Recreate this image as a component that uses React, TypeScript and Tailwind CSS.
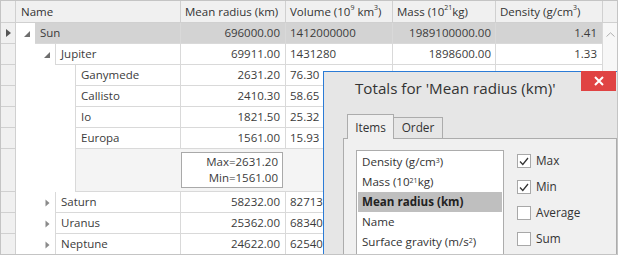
import React from "react";

type Row = {
  name: string;
  level: number;
  state: "open" | "closed" | "leaf";
  radius: string;
  volume: React.ReactNode;
  mass: string;
  density: string;
  current?: boolean;
};

const rows: Row[] = [
  { name: "Sun", level: 0, state: "open", radius: "696000.00", volume: "1412000000", mass: "1989100000.00", density: "1.41", current: true },
  { name: "Jupiter", level: 1, state: "open", radius: "69911.00", volume: "1431280", mass: "1898600.00", density: "1.33" },
  { name: "Ganymede", level: 2, state: "leaf", radius: "2631.20", volume: "76.30", mass: "148.19", density: "1.94" },
  { name: "Callisto", level: 2, state: "leaf", radius: "2410.30", volume: "58.65", mass: "107.59", density: "1.83" },
  { name: "Io", level: 2, state: "leaf", radius: "1821.50", volume: "25.32", mass: "89.32", density: "3.53" },
  { name: "Europa", level: 2, state: "leaf", radius: "1561.00", volume: "15.93", mass: "48.00", density: "3.01" },
];

const planets: Row[] = [
  { name: "Saturn", level: 1, state: "closed", radius: "58232.00", volume: "827130", mass: "568460.00", density: "0.69" },
  { name: "Uranus", level: 1, state: "closed", radius: "25362.00", volume: "68340", mass: "86832.00", density: "1.27" },
  { name: "Neptune", level: 1, state: "closed", radius: "24622.00", volume: "62540", mass: "102430.00", density: "1.64" },
];

const font = { fontFamily: "'Open Sans', 'Noto Sans', sans-serif" };

function OpenArrow() {
  return (
    <svg width="6" height="6" viewBox="0 0 6 6">
      <polygon points="6,0 6,6 0,6" fill="#6e6e6e" />
    </svg>
  );
}

function ClosedArrow() {
  return (
    <svg width="5" height="8" viewBox="0 0 5 8">
      <polygon points="0.5,0.5 4.5,4 0.5,7.5" fill="#8a8a8a" />
    </svg>
  );
}

function Indicator({ current }: { current?: boolean }) {
  return (
    <div className="flex h-full w-[15px] shrink-0 items-center border-r border-b border-[#d0d0d0] bg-[#f0f0f0] pl-[5px]">
      {current ? (
        <svg width="5" height="8" viewBox="0 0 5 8">
          <polygon points="0,0 5,4 0,8" fill="#555" />
        </svg>
      ) : null}
    </div>
  );
}

function DataRow({ r }: { r: Row }) {
  const indent = r.level === 0 ? "w-[19px]" : r.level === 1 ? "w-[39px]" : "w-[59px]";
  return (
    <div className="flex h-[21px] text-[11.5px] text-[#3b3b3b]">
      <Indicator current={r.current} />
      <div className="flex w-[165px] shrink-0">
        <div className={`${indent} flex shrink-0 items-center justify-end bg-white pr-[5px]`}>
          {r.state === "open" ? <OpenArrow /> : r.state === "closed" ? <ClosedArrow /> : null}
        </div>
        <div
          className={`flex flex-1 items-center border-r border-b border-[#d9d9d9] pl-[5px] ${
            r.current ? "bg-[#d3d3d3]" : "border-l"
          }`}
        >
          {r.name}
        </div>
      </div>
      <div className={`flex flex-1 ${r.current ? "bg-[#d3d3d3]" : ""}`}>
        <div className="flex w-[105px] shrink-0 items-center justify-end border-r border-b border-[#d9d9d9] pr-[5px]">
          {r.radius}
        </div>
        <div className="flex w-[107px] shrink-0 items-center border-r border-b border-[#d9d9d9] pl-[4px]">
          {r.volume}
        </div>
        <div className="flex w-[103px] shrink-0 items-center justify-end border-r border-b border-[#d9d9d9] pr-[4px]">
          {r.mass}
        </div>
        <div className="flex w-[107px] shrink-0 items-center justify-end border-r border-b border-[#d9d9d9] pr-[5px]">
          {r.density}
        </div>
      </div>
    </div>
  );
}

function Header() {
  const cell = "flex shrink-0 items-center border-r border-b border-[#d0d0d0] pl-[4px]";
  return (
    <div className="flex h-[22px] bg-[#f0f0f0] text-[11.5px] text-[#333]">
      <div className="w-[15px] shrink-0 border-r border-b border-[#d0d0d0]" />
      <div className={`${cell} w-[165px] pl-[5px]`}>Name</div>
      <div className={`${cell} w-[105px]`}>Mean radius (km)</div>
      <div className={`${cell} w-[107px]`}>
        Volume (10<sup className="text-[7px]">9</sup>&nbsp;km<sup className="text-[7px]">3</sup>)
      </div>
      <div className={`${cell} w-[103px]`}>
        Mass (10<sup className="text-[7px]">21</sup>kg)
      </div>
      <div className={`${cell} w-[107px]`}>
        Density (g/cm<sup className="text-[7px]">3</sup>)
      </div>
      <div className="flex-1 border-b border-[#d0d0d0]" />
    </div>
  );
}

function Check({ checked }: { checked: boolean }) {
  return (
    <div className="flex h-[14px] w-[14px] shrink-0 items-center justify-center border border-[#a8a8a8] bg-white">
      {checked ? (
        <svg width="10" height="9" viewBox="0 0 10 9">
          <polyline points="1,4.5 3.8,7.5 9,1" fill="none" stroke="#333" strokeWidth="1.3" />
        </svg>
      ) : null}
    </div>
  );
}

function TotalsDialog() {
  const items = [
    <>Density (g/cm<sup className="text-[7px]">3</sup>)</>,
    <>Mass (10<sup className="text-[7px]">21</sup>kg)</>,
    <>Mean radius (km)</>,
    <>Name</>,
    <>Surface gravity (m/s<sup className="text-[7px]">2</sup>)</>,
  ];
  const checks: [string, boolean][] = [
    ["Max", true],
    ["Min", true],
    ["Average", false],
    ["Sum", false],
  ];
  return (
    <div className="absolute top-[70px] left-[322px] right-0 bottom-0 border-t border-l border-[#2b7bd6] bg-[#e6e6e6] text-[#333]">
      <button
        type="button"
        className="absolute -top-px right-px flex h-[20px] w-[35px] items-center justify-center bg-[#e04343]"
      >
        <svg width="10" height="10" viewBox="0 0 10 10">
          <path d="M1 1L9 9M9 1L1 9" stroke="#fff" strokeWidth="2" />
        </svg>
      </button>
      <div className="w-fit pt-[3px] pl-[31px] text-[15.2px] leading-[26px]">Totals for 'Mean radius (km)'</div>
      <div className="mt-[13px] ml-[19px] flex h-[25px] items-end text-[11.8px]">
        <div className="relative z-10 ml-[4px] flex h-[25px] w-[47px] items-center justify-center border border-b-0 border-[#acacac] bg-[#f0f0f0] pt-[1px]">
          Items
        </div>
        <div className="mb-px flex h-[21px] w-[49px] items-center justify-center border border-l-0 border-b-0 border-[#acacac] bg-[#e6e6e6]">
          Order
        </div>
      </div>
      <div className="-mt-px ml-[19px] flex h-[200px] gap-[13px] border border-[#acacac] bg-[#f0f0f0] pt-[11px] pl-[12px]">
        <div className="h-[120px] w-[148px] shrink-0 border border-[#acacac] bg-white p-px text-[11.6px]">
          {items.map((it, i) => (
            <div
              key={i}
              className={`flex h-[20px] items-center pl-[4px] ${i === 2 ? "bg-[#bfbfbf] font-bold text-[#222]" : ""}`}
            >
              <span>{it}</span>
            </div>
          ))}
        </div>
        <div className="flex flex-col gap-[12px] pt-[4px] text-[11.8px]">
          {checks.map(([label, on]) => (
            <div key={label} className="flex h-[14px] items-center gap-[5px]">
              <Check checked={on} />
              <span>{label}</span>
            </div>
          ))}
        </div>
      </div>
    </div>
  );
}

export default function App() {
  return (
    <div className="relative h-[255px] w-[618px] overflow-hidden border border-[#c4c4c4] bg-white" style={font}>
      <Header />
      <div className="flex">
        <div className="flex w-[602px] shrink-0 flex-col">
          {rows.map((r) => (
            <DataRow key={r.name} r={r} />
          ))}
          <div className="flex h-[43px]">
            <Indicator />
            <div className="w-[59px] shrink-0 bg-white" />
            <div className="flex-1 border-l border-b border-r border-[#d9d9d9] bg-[#f4f4f4]">
              <div className="ml-[105px] mt-[3px] h-[36px] w-[102px] border border-[#a9a9a9] bg-white pr-[4px] pt-[1px] text-right text-[11.5px] leading-[16px] text-[#3b3b3b]">
                <div>Max=2631.20</div>
                <div>Min=1561.00</div>
              </div>
            </div>
          </div>
          {planets.map((r) => (
            <DataRow key={r.name} r={r} />
          ))}
        </div>
        <div className="flex flex-1 justify-center bg-[#f7f7f7] pt-[9px]">
          <svg width="9" height="5" viewBox="0 0 9 5">
            <polyline points="0.5,4.5 4.5,0.8 8.5,4.5" fill="none" stroke="#b0b0b0" strokeWidth="1" />
          </svg>
        </div>
      </div>
      <TotalsDialog />
    </div>
  );
}
